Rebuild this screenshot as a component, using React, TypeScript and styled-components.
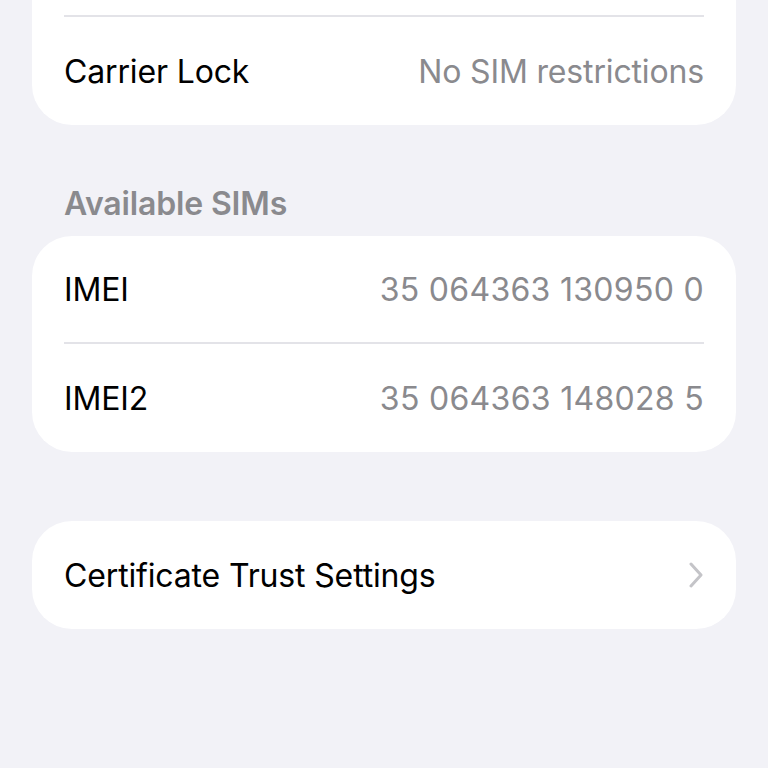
import React from 'react';
import styled, { createGlobalStyle } from 'styled-components';

const GlobalStyle = createGlobalStyle`
    html, body {
        margin: 0;
        padding: 0;
        background: #f2f2f7;
        overflow: hidden;
    }
    body {
        font-family: Inter, "Noto Sans", "Liberation Sans", sans-serif;
        -webkit-font-smoothing: antialiased;
    }
`

const Page = styled.div`
    width: 768px;
    height: 768px;
    display: flex;
    flex-flow: column nowrap;
    padding: 0 32px;
    box-sizing: border-box;
`

const Card = styled.section<{ $offsetTop?: number; $gapAbove?: number }>`
    background: #ffffff;
    border-radius: 40px;
    padding: 0 32px;
    display: flex;
    flex-flow: column nowrap;
    margin-top: ${p => (p.$offsetTop ? `-${p.$offsetTop}px` : `${p.$gapAbove ?? 0}px`)};
`

const Row = styled.div<{ $divider?: boolean }>`
    height: 108px;
    display: flex;
    flex-flow: row nowrap;
    align-items: center;
    justify-content: space-between;
    border-bottom: ${p => (p.$divider ? '2px solid #e3e3e8' : 'none')};
    box-sizing: border-box;
`

const Label = styled.span`
    font-size: 32px;
    color: #000000;
    letter-spacing: -0.15px;
`

const Value = styled.span<{ $numeric?: boolean }>`
    font-size: 32px;
    color: #8a8a8e;
    letter-spacing: ${p => (p.$numeric ? '0.3px' : '-0.15px')};
`

const SectionHeader = styled.h2`
    margin: 61px 0 14px 0;
    padding-left: 32px;
    font-size: 32px;
    line-height: 36px;
    font-weight: 600;
    color: #8a8a8e;
    letter-spacing: -0.15px;
`

const Chevron = () => (
    <svg width="16" height="26" viewBox="0 0 16 26" fill="none">
        <path d="M3 2 L13 13 L3 24" stroke="#c4c4c8" strokeWidth="3" strokeLinecap="round" strokeLinejoin="round" />
    </svg>
)

export default function App() {
    return (
        <>
            <GlobalStyle />
            <Page>
                <Card $offsetTop={91}>
                    <Row $divider />
                    <Row>
                        <Label>Carrier Lock</Label>
                        <Value>No SIM restrictions</Value>
                    </Row>
                </Card>

                <SectionHeader>Available SIMs</SectionHeader>
                <Card>
                    <Row $divider>
                        <Label>IMEI</Label>
                        <Value $numeric>35 064363 130950 0</Value>
                    </Row>
                    <Row>
                        <Label>IMEI2</Label>
                        <Value $numeric>35 064363 148028 5</Value>
                    </Row>
                </Card>

                <Card $gapAbove={69}>
                    <Row>
                        <Label>Certificate Trust Settings</Label>
                        <Chevron />
                    </Row>
                </Card>
            </Page>
        </>
    )
}
